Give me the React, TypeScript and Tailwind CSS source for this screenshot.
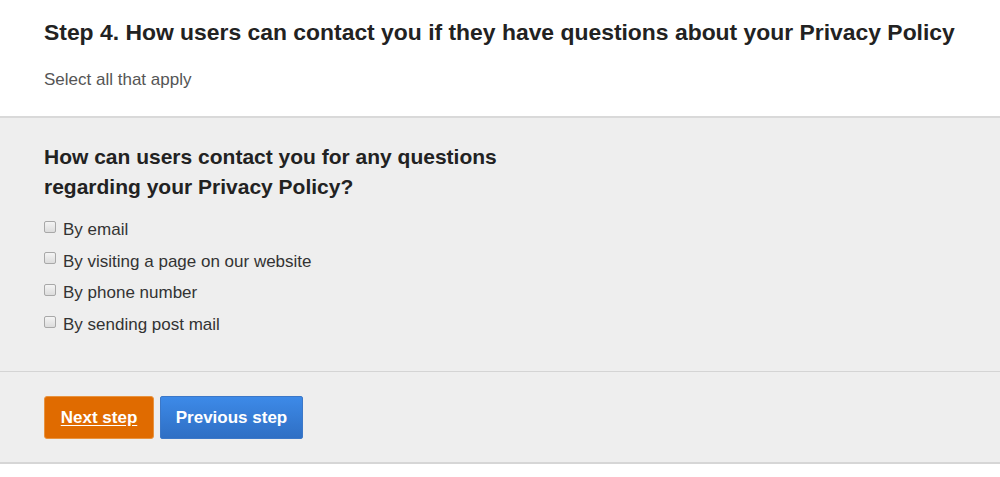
const options = [
  'By email',
  'By visiting a page on our website',
  'By phone number',
  'By sending post mail',
];

export default function App() {
  return (
    <div
      className="w-[1000px] h-[477px] bg-white text-[#222]"
      style={{ fontFamily: '"Liberation Sans", Arial, sans-serif' }}
    >
      <div className="h-[118px] border-b-2 border-[#d9d9d9] px-[44px] pt-[18px]">
        <h1 className="text-[22.9px] leading-[28px] font-bold text-[#222] whitespace-nowrap">
          Step 4. How users can contact you if they have questions about your Privacy Policy
        </h1>
        <p className="mt-[23px] text-[17px] leading-[22px] text-[#555]">Select all that apply</p>
      </div>

      <div className="h-[254px] bg-[#eeeeee] border-b border-[#d4d4d4] px-[44px] pt-[24px]">
        <h2 className="w-[500px] text-[21px] leading-[30px] font-bold text-[#222]">
          How can users contact you for any questions regarding your Privacy Policy?
        </h2>
        <ul className="mt-[12px] flex flex-col">
          {options.map((o) => (
            <li key={o} className="flex items-center h-[31.6px]">
              <span className="mr-[7px] -mt-[6px] block h-[12px] w-[12px] rounded-[2px] border border-[#a8a8a8] bg-gradient-to-b from-[#f4f4f4] to-[#dcdcdc]" />
              <span className="text-[17px] text-[#333]">{o}</span>
            </li>
          ))}
        </ul>
      </div>

      <div className="h-[92px] bg-[#eeeeee] border-b-2 border-[#d6d6d6] px-[44px] pt-[24px] flex items-start gap-[6px]">
        <button className="h-[43px] w-[110px] rounded-[3px] border border-[#e8933f] bg-[#e06b00] text-[17px] font-bold text-white underline underline-offset-2">
          Next step
        </button>
        <button className="h-[43px] w-[143px] rounded-[2px] border border-[#3c78c8] bg-gradient-to-b from-[#3d8ae8] to-[#2f6fc4] text-[17px] font-bold text-white">
          Previous step
        </button>
      </div>
    </div>
  );
}
